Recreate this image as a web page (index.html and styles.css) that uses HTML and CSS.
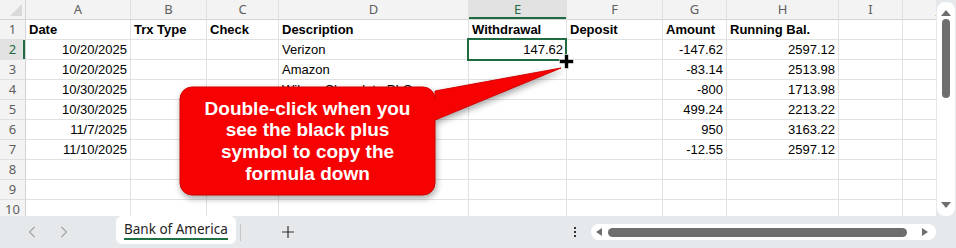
FILE: index.html
```html
<!DOCTYPE html>
<html lang="en">
<head>
    <meta charset="UTF-8">
    <title>Bank of America - Register</title>
    <link rel="stylesheet" href="styles.css">
</head>
<body>
<div class="app">
    <div class="main">
        <div class="sheet">
            <div class="grid">
                <div class="corner"><span class="tri"></span></div>
                <div class="ch">A</div><div class="ch">B</div><div class="ch">C</div><div class="ch">D</div>
                <div class="ch sel">E</div><div class="ch">F</div><div class="ch">G</div><div class="ch">H</div>
                <div class="ch">I</div><div class="ch">J</div>

                <div class="rh">1</div>
                <div class="c b">Date</div><div class="c b">Trx Type</div><div class="c b">Check</div><div class="c b">Description</div>
                <div class="c b">Withdrawal</div><div class="c b">Deposit</div><div class="c b">Amount</div><div class="c b">Running Bal.</div>
                <div class="c"></div><div class="c"></div>

                <div class="rh sel">2</div>
                <div class="c n">10/20/2025</div><div class="c"></div><div class="c"></div><div class="c">Verizon</div>
                <div class="c n active">147.62<span class="handle"><svg width="15" height="15" viewBox="0 0 15 15"><path d="M5.5 0.5h4v5h5v4h-5v5h-4v-5h-5v-4h5z" fill="#000" stroke="#fff" stroke-width="0.6"/></svg></span></div>
                <div class="c"></div><div class="c n">-147.62</div><div class="c n">2597.12</div>
                <div class="c"></div><div class="c"></div>

                <div class="rh">3</div>
                <div class="c n">10/20/2025</div><div class="c"></div><div class="c"></div><div class="c">Amazon</div>
                <div class="c"></div><div class="c"></div><div class="c n">-83.14</div><div class="c n">2513.98</div>
                <div class="c"></div><div class="c"></div>

                <div class="rh">4</div>
                <div class="c n">10/30/2025</div><div class="c"></div><div class="c"></div><div class="c">Wilson Chocolate PLC</div>
                <div class="c"></div><div class="c"></div><div class="c n">-800</div><div class="c n">1713.98</div>
                <div class="c"></div><div class="c"></div>

                <div class="rh">5</div>
                <div class="c n">10/30/2025</div><div class="c"></div><div class="c"></div><div class="c">Payroll</div>
                <div class="c"></div><div class="c"></div><div class="c n">499.24</div><div class="c n">2213.22</div>
                <div class="c"></div><div class="c"></div>

                <div class="rh">6</div>
                <div class="c n">11/7/2025</div><div class="c"></div><div class="c"></div><div class="c"></div>
                <div class="c"></div><div class="c"></div><div class="c n">950</div><div class="c n">3163.22</div>
                <div class="c"></div><div class="c"></div>

                <div class="rh">7</div>
                <div class="c n">11/10/2025</div><div class="c"></div><div class="c"></div><div class="c"></div>
                <div class="c"></div><div class="c"></div><div class="c n">-12.55</div><div class="c n">2597.12</div>
                <div class="c"></div><div class="c"></div>

                <div class="rh">8</div>
                <div class="c"></div><div class="c"></div><div class="c"></div><div class="c"></div><div class="c"></div>
                <div class="c"></div><div class="c"></div><div class="c"></div><div class="c"></div><div class="c"></div>

                <div class="rh">9</div>
                <div class="c"></div><div class="c"></div><div class="c"></div><div class="c"></div><div class="c"></div>
                <div class="c"></div><div class="c"></div><div class="c"></div><div class="c"></div><div class="c"></div>

                <div class="rh">10</div>
                <div class="c"></div><div class="c"></div><div class="c"></div><div class="c"></div><div class="c"></div>
                <div class="c"></div><div class="c"></div><div class="c"></div><div class="c"></div><div class="c"></div>
            </div>
        </div>
        <div class="vscroll">
            <div class="vtrack">
                <span class="arrow-up"></span>
                <span class="vthumb"></span>
                <span class="arrow-down"></span>
            </div>
        </div>
    </div>

    <div class="tabbar">
        <div class="nav">
            <svg width="8" height="12" viewBox="0 0 8 12"><path d="M6.5 1 1.5 6l5 5" fill="none" stroke="#a3a3a3" stroke-width="1.2"/></svg>
            <svg width="8" height="12" viewBox="0 0 8 12"><path d="M1.5 1l5 5-5 5" fill="none" stroke="#a3a3a3" stroke-width="1.2"/></svg>
        </div>
        <div class="tab"><span class="tab-label">Bank of America</span></div>
        <div class="sep"></div>
        <div class="add">
            <svg width="14" height="14" viewBox="0 0 14 14"><path d="M7 1v12M1 7h12" stroke="#333" stroke-width="1.2"/></svg>
        </div>
        <div class="dots"><i></i><i></i><i></i></div>
        <div class="htrack">
            <span class="arrow-left"></span>
            <span class="hthumb"></span>
            <span class="arrow-right"></span>
        </div>
    </div>

    <!-- callout sits over the grid -->
    <svg class="callout-shape" width="956" height="248" viewBox="0 0 956 248">
        <path d="M192 87h231a12 12 0 0 1 12 12v-8l126 -23 -126 52v63a12 12 0 0 1 -12 12h-231a12 12 0 0 1 -12 -12v-84a12 12 0 0 1 12 -12z" fill="#f70202" stroke="#d40000" stroke-width="1"/>
    </svg>
    <div class="callout-text">Double-click when you<br>see the black plus<br>symbol to copy the<br>formula down</div>
</div>
</body>
</html>
```

FILE: styles.css
```css
body {
    margin: 0;
    background-color: #ffffff;
    font-family: 'Liberation Sans', Arial, sans-serif;
}
.app {
    position: relative;
    width: 956px;
    height: 248px;
    overflow: hidden;
    display: flex;
    flex-direction: column;
}
.main {
    display: flex;
    height: 216px;
}
.sheet {
    width: 936px;
    height: 216px;
    overflow: hidden;
}
.grid {
    display: grid;
    grid-template-columns: 26px 105px 76px 72px 190px 98px 96px 64px 112px 64px 72px;
    grid-auto-rows: 20px;
    width: 979px;
}
.grid > div {
    box-sizing: border-box;
    border-right: 1px solid #e1e1e1;
    border-bottom: 1px solid #e1e1e1;
    white-space: nowrap;
}
.corner {
    position: relative;
    background-color: #f3f3f3;
    border-right-color: #d4d4d4 !important;
    border-bottom-color: #d4d4d4 !important;
}
.tri {
    position: absolute;
    right: 3px;
    bottom: 3px;
    width: 0;
    height: 0;
    border-left: 12px solid transparent;
    border-bottom: 12px solid #d9d9d9;
}
.ch, .rh {
    background-color: #f3f3f3;
    color: #5e5e5e;
    font-family: 'Noto Sans', sans-serif;
    font-size: 13px;
    line-height: 19px;
    text-align: center;
}
.ch {
    border-bottom-color: #d4d4d4 !important;
}
.rh {
    border-right-color: #d4d4d4 !important;
}
.ch.sel {
    background-color: #e2e2e2;
    color: #1e6b41;
    box-shadow: inset 0 -2px 0 #1e6b41;
}
.rh.sel {
    background-color: #e2e2e2;
    color: #1e6b41;
    box-shadow: inset -2px 0 0 #1e6b41;
}
.c {
    padding: 0 3px;
    font-size: 13px;
    line-height: 19px;
    color: #000000;
    overflow: visible;
}
.c.b {
    font-weight: bold;
}
.c.n {
    text-align: right;
}
.active {
    position: relative;
}
.active::after {
    content: '';
    position: absolute;
    left: -2px;
    top: -2px;
    right: -1px;
    bottom: -2px;
    border: 2px solid #1e6b41;
}
.handle {
    position: absolute;
    right: -8px;
    bottom: -10px;
    width: 15px;
    height: 15px;
    z-index: 2;
}
.handle svg {
    display: block;
}
.vscroll {
    width: 20px;
    background-color: #e6e9ec;
    padding: 2px 1px 0 1px;
    box-sizing: border-box;
}
.vtrack {
    position: relative;
    height: 214px;
    background-color: #ffffff;
    border-radius: 8px;
}
.arrow-up, .arrow-down {
    position: absolute;
    left: 4px;
    width: 0;
    height: 0;
    border-left: 5px solid transparent;
    border-right: 5px solid transparent;
}
.arrow-up {
    top: 8px;
    border-bottom: 6px solid #6e6e6e;
}
.arrow-down {
    bottom: 8px;
    border-top: 6px solid #6e6e6e;
}
.vthumb {
    position: absolute;
    left: 5px;
    top: 17px;
    width: 8px;
    height: 79px;
    background-color: #6e6e6e;
    border-radius: 4px;
}
.tabbar {
    display: flex;
    align-items: center;
    height: 32px;
    background-color: #e6e9ec;
}
.nav {
    display: flex;
    gap: 24px;
    margin-left: 28px;
    width: 88px;
}
.nav svg {
    display: block;
}
.tab {
    align-self: flex-start;
    box-sizing: border-box;
    width: 120px;
    height: 28px;
    padding: 4px 8px 0;
    background-color: #ffffff;
    border-radius: 6px;
}
.tab-label {
    display: inline-block;
    font-family: 'Noto Sans', sans-serif;
    font-size: 13.5px;
    line-height: 18px;
    color: #242424;
    border-bottom: 2px solid #1e7145;
}
.sep {
    width: 1px;
    height: 17px;
    margin-left: 4px;
    background-color: #c6c6c6;
}
.add {
    margin-left: 40px;
    width: 14px;
    height: 14px;
}
.add svg {
    display: block;
}
.dots {
    display: flex;
    flex-direction: column;
    gap: 2px;
    margin-left: 279px;
    width: 2px;
}
.dots i {
    display: block;
    width: 2px;
    height: 2px;
    background-color: #333333;
}
.htrack {
    position: relative;
    margin-left: 15px;
    width: 345px;
    height: 16px;
    background-color: #ffffff;
    border-radius: 8px;
}
.arrow-left, .arrow-right {
    position: absolute;
    top: 4px;
    width: 0;
    height: 0;
    border-top: 4px solid transparent;
    border-bottom: 4px solid transparent;
}
.arrow-left {
    left: 5px;
    border-right: 6px solid #6e6e6e;
}
.arrow-right {
    right: 8px;
    border-left: 6px solid #6e6e6e;
}
.hthumb {
    position: absolute;
    left: 17px;
    top: 4px;
    width: 299px;
    height: 9px;
    background-color: #6e6e6e;
    border-radius: 5px;
}
.callout-shape {
    position: absolute;
    left: 0;
    top: 0;
    pointer-events: none;
    filter: drop-shadow(1px 3px 3px rgba(0, 0, 0, 0.35));
}
.callout-text {
    position: absolute;
    left: 180px;
    top: 87px;
    width: 255px;
    height: 108px;
    display: flex;
    align-items: center;
    justify-content: center;
    text-align: center;
    color: #ffffff;
    font-weight: bold;
    font-size: 19px;
    line-height: 21.7px;
}
```
